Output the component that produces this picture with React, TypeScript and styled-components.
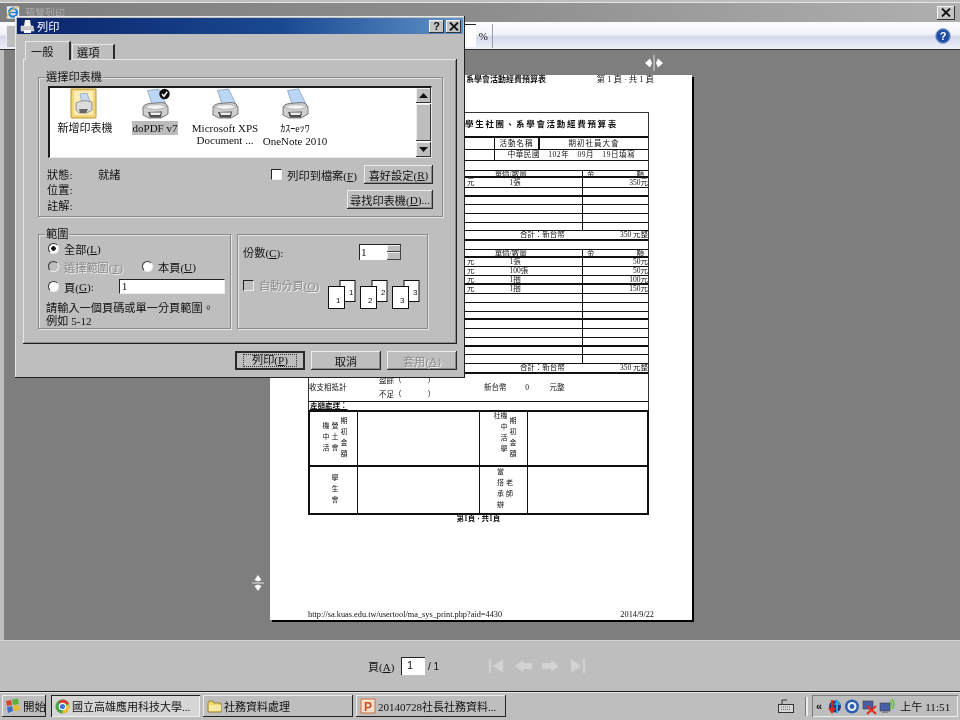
import React from 'react';
import styled, {createGlobalStyle} from 'styled-components';

const UI_FONT = `"Liberation Serif", "Noto Sans CJK TC", serif`;
const FACE = '#bebebe';

const GlobalStyle = createGlobalStyle`
  html, body {
    margin: 0;
    padding: 0;
    background: ${FACE};
  }
  #root {
    width: 960px;
    height: 720px;
    overflow: hidden;
  }
`

const Screen = styled.div`
  position: relative;
  width: 960px;
  height: 720px;
  overflow: hidden;
  display: flex;
  flex-direction: column;
  background: ${FACE};
  font-family: ${UI_FONT};
  font-size: 11px;
  color: #111;
  filter: blur(0.3px);
`

const Key = styled.u`
  text-underline-offset: 1px;
`

/* preview window */

const TitleBar = styled.div`
  height: 20px;
  margin-top: 2px;
  padding: 0 5px 0 6px;
  display: flex;
  align-items: center;
  gap: 5px;
  flex-shrink: 0;
  box-sizing: border-box;
  color: #a9a9a9;
  font-size: 10px;
  border-top: 1px solid #e4e4e4;
  background: linear-gradient(90deg, #7f7f7f 0%, #8d8d8d 50%, #b0b0b0 100%);
`

const TitleText = styled.span`
  flex: 1;
`

const CloseButton = styled.div<{$small?: boolean}>`
  width: ${p => p.$small ? 15 : 18}px;
  height: ${p => p.$small ? 13 : 14}px;
  display: flex;
  align-items: center;
  justify-content: center;
  background: #c4c4c4;
  color: #111;
  font-family: "Liberation Sans", sans-serif;
  font-weight: 700;
  font-size: 11px;
  box-shadow: inset -1px -1px #333, inset 1px 1px #f4f4f4;
`

const Toolbar = styled.div`
  height: 28px;
  flex-shrink: 0;
  display: flex;
  align-items: center;
  padding: 0 9px 0 6px;
  border-bottom: 1px solid #2e2e2e;
  box-sizing: border-box;
  background: linear-gradient(180deg, #fbfbff 0%, #f2f3fb 45%, #d4d8e9 55%, #e6e8f4 85%, #eeeff8 100%);
`

const ToolButton = styled.div`
  width: 9px;
  height: 22px;
  background: #bdbdbd;
  box-shadow: inset 1px 1px #eee;
`

const ZoomField = styled.div`
  margin-left: auto;
  width: 20px;
  height: 22px;
  background: #fff;
  border-top: 1px solid #222;
`

const ZoomUnit = styled.span`
  margin: 0 4px 0 3px;
  font-size: 11px;
`

const ToolDivider = styled.div`
  width: 1px;
  height: 24px;
  background: #9a9cab;
  margin-right: 442px;
`

const Preview = styled.div`
  position: relative;
  flex: 1;
  margin-left: 4px;
  padding: 25px 2px 0 0;
  display: flex;
  justify-content: center;
  background: #7e7e7e;
`

const ColumnHandle = styled.div`
  position: absolute;
  left: 640px;
  top: 5px;
  line-height: 0;
`

const RowHandle = styled.div`
  position: absolute;
  left: 244px;
  top: 523px;
  line-height: 0;
`

const Pager = styled.div`
  height: 51px;
  flex-shrink: 0;
  box-sizing: border-box;
  padding: 0 0 0 368px;
  display: flex;
  align-items: center;
  border-top: 1px solid #d2d2d2;
  font-size: 11px;
`

const PageLabel = styled.span`
  width: 33px;
`

const PageInput = styled.div`
  width: 24px;
  height: 18px;
  box-sizing: border-box;
  padding: 1px 0 0 5px;
  background: #fff;
  border-top: 1px solid #222;
  border-left: 1px solid #222;
  font-family: "Liberation Sans", sans-serif;
  font-size: 11px;
`

const PageTotal = styled.span`
  width: 62px;
  padding-left: 3px;
  box-sizing: border-box;
  font-family: "Liberation Sans", sans-serif;
  font-size: 10px;
`

const NavIcons = styled.div`
  display: flex;
  align-items: center;
  gap: 8px;
`

/* printed page */

const Paper = styled.div`
  width: 422px;
  height: 545px;
  box-sizing: border-box;
  padding: 0 38px;
  display: flex;
  flex-direction: column;
  background: #fff;
  box-shadow: 2px 2px 0 #000;
  font-size: 7.5px;
  line-height: 1;
  color: #111;
`

const PageHead = styled.div`
  height: 37px;
  box-sizing: border-box;
  padding: 0 0 0 38px;
  display: flex;
  justify-content: space-between;
  font-size: 8px;
  line-height: 9px;
`

const HeadBold = styled.span`
  font-weight: 700;
`

const HeadCount = styled.span`
  font-size: 8.4px;
  white-space: pre;
`

const DocTable = styled.div`
  border-top: 1px solid #333;
  border-left: 1px solid #333;
  border-right: 1px solid #333;
  width: 341px;
  box-sizing: border-box;
`

const DocRow = styled.div<{$h: number; $thick?: boolean; $cols?: string}>`
  height: ${p => p.$h}px;
  box-sizing: border-box;
  display: grid;
  grid-template-columns: ${p => p.$cols || '1fr'};
  align-items: stretch;
  border-bottom: ${p => p.$thick ? 2 : 1}px solid #111;
`

const DocCell = styled.div<{$line?: boolean; $align?: string; $thickLine?: boolean}>`
  display: flex;
  align-items: center;
  justify-content: ${p => p.$align || 'flex-start'};
  white-space: nowrap;
  border-right: ${p => p.$thickLine ? '2px solid #111' : p.$line ? '1px solid #111' : 'none'};
`

const DocHeading = styled(DocCell)`
  font-size: 8.5px;
  letter-spacing: 1.7px;
  padding-left: 156px;
  font-weight: 700;
`

const SpacedCell = styled(DocCell)`
  letter-spacing: 1px;
`

const DateCell = styled(DocCell)`
  letter-spacing: 0.6px;
`

const QtyCell = styled(DocCell)`
  padding-left: 2px;
`

const QtyText = styled.span`
  margin-left: 35px;
`

const WideGapCell = styled(DocCell)`
  justify-content: space-between;
  padding: 0 4px;
`

const AmountCell = styled(DocCell)`
  justify-content: flex-end;
`

const TotalRow = styled(DocRow)`
  display: flex;
  justify-content: flex-end;
  align-items: center;
  gap: 55px;
`

const BalanceRow = styled(DocRow)`
  display: flex;
  align-items: center;
`

const BalanceLabel = styled.span`
  width: 70px;
`

const BalanceParts = styled.div`
  width: 105px;
  display: flex;
  flex-direction: column;
  gap: 6px;
`

const BalanceAmount = styled.span`
  white-space: pre;
`

const NoteRow = styled(DocRow)`
  display: flex;
  align-items: center;
  font-weight: 700;
  padding-left: 1px;
  text-decoration: underline;
  border-color: #111;
`

const SignTable = styled.div`
  width: 341px;
  height: 105px;
  box-sizing: border-box;
  display: grid;
  grid-template-columns: 48px 122px 48px 1fr;
  grid-template-rows: 55px 1fr;
  border: 2px solid #111;
  margin-top: -1px;
`

const SignCell = styled.div<{$top?: boolean; $last?: boolean}>`
  display: flex;
  justify-content: center;
  align-items: center;
  gap: 2px;
  border-right: ${p => p.$last ? 'none' : '1px solid #111'};
  border-bottom: ${p => p.$top ? '2px solid #111' : 'none'};
`

const SignText = styled.span`
  writing-mode: vertical-rl;
  letter-spacing: 4px;
  font-size: 7px;
`

const PageNumber = styled.div`
  width: 341px;
  text-align: center;
  font-size: 7.5px;
  font-weight: 700;
`

const PageFoot = styled.div`
  margin-top: auto;
  padding-bottom: 1px;
  display: flex;
  justify-content: space-between;
  font-size: 8.3px;
`

/* print dialog */

const Dialog = styled.div`
  position: absolute;
  left: 15px;
  top: 16px;
  width: 450px;
  height: 362px;
  box-sizing: border-box;
  padding: 2px;
  background: ${FACE};
  box-shadow: inset -1px -1px #202020, inset 1px 1px #e8e8e8;
  font-size: 11.2px;
`

const DialogTitle = styled.div`
  height: 16px;
  display: flex;
  align-items: center;
  gap: 2px;
  padding: 0 2px 0 3px;
  color: #fff;
  background: linear-gradient(90deg, #0a246a 0%, #1a4a92 60%, #5f93c8 100%);
`

const DialogName = styled.span`
  flex: 1;
  font-size: 11.2px;
`

const DialogButtons = styled.div`
  display: flex;
  gap: 2px;
`

const DialogBody = styled.div`
  padding: 7px 6px 0 6px;
`

const TabStrip = styled.div`
  display: flex;
  align-items: flex-end;
  height: 18px;
  padding-left: 2px;
`

const Tab = styled.div<{$active?: boolean}>`
  width: ${p => p.$active ? 46 : 43}px;
  height: ${p => p.$active ? 19 : 15}px;
  box-sizing: border-box;
  padding-left: ${p => p.$active ? 5 : 4}px;
  margin-bottom: ${p => p.$active ? -1 : 0}px;
  position: relative;
  display: flex;
  align-items: center;
  background: ${FACE};
  border-top: 1px solid #e6e6e6;
  border-left: 1px solid #e6e6e6;
  border-right: 2px solid #2a2a2a;
  margin-right: 1px;
`

const TabPanel = styled.div`
  width: 434px;
  height: 285px;
  box-sizing: border-box;
  padding: 18px 14px 0 15px;
  box-shadow: inset -1px -1px #202020, inset 1px 1px #e6e6e6, inset -2px -2px #8a8a8a;
`

const Group = styled.div<{$w?: number; $h: number}>`
  position: relative;
  width: ${p => p.$w ? `${p.$w}px` : 'auto'};
  height: ${p => p.$h}px;
  box-sizing: border-box;
  border: 1px solid #8a8a8a;
  box-shadow: 1px 1px 0 #e4e4e4, inset 1px 1px 0 #e4e4e4;
`

const Legend = styled.span`
  position: absolute;
  left: 6px;
  top: -8px;
  padding: 0 1px;
  line-height: 14px;
  background: ${FACE};
`

const PrinterGroup = styled(Group)`
  padding: 8px 10px 0 9px;
`

const ListBox = styled.div`
  width: 384px;
  height: 72px;
  box-sizing: border-box;
  display: flex;
  background: #fff;
  border-top: 2px solid #1c1c1c;
  border-left: 2px solid #1c1c1c;
  border-bottom: 1px solid #e8e8e8;
  border-right: 1px solid #e8e8e8;
`

const PrinterItem = styled.div`
  width: 70px;
  display: flex;
  flex-direction: column;
  align-items: center;
  text-align: center;
  line-height: 12px;
  flex-shrink: 0;
  white-space: nowrap;
`

const PrinterIconBox = styled.div`
  height: 33px;
  line-height: 0;
`

const PrinterLabel = styled.span<{$selected?: boolean}>`
  padding: 1px 1px;
  background: ${p => p.$selected ? '#bcbcbc' : 'transparent'};
  font-size: 11px;
`

const SmallKana = styled.span`
  font-size: 10px;
`

const ScrollBar = styled.div`
  margin: 0 0 0 auto;
  width: 15px;
  display: flex;
  flex-direction: column;
  gap: 1px;
  background: #fff;
`

const ScrollArrow = styled.div`
  height: 15px;
  display: flex;
  align-items: center;
  justify-content: center;
  background: ${FACE};
  box-shadow: inset -1px -1px #333, inset 1px 1px #eee;
`

const ScrollThumb = styled.div`
  flex: 1;
  background: ${FACE};
  box-shadow: inset -1px -1px #333, inset 1px 1px #eee;
`

const StatusArea = styled.div`
  display: flex;
  justify-content: space-between;
  margin: 7px 0 0 -1px;
  width: 386px;
`

const StatusGrid = styled.div`
  display: grid;
  grid-template-columns: 51px auto;
  grid-auto-rows: 15.5px;
  align-items: center;
  padding-top: 1px;
`

const StatusActions = styled.div`
  display: flex;
  flex-direction: column;
  align-items: flex-end;
  gap: 6px;
`

const StatusLine = styled.div`
  display: flex;
  align-items: center;
`

const Check = styled.span<{$disabled?: boolean}>`
  width: 11px;
  height: 11px;
  box-sizing: border-box;
  margin-right: 5px;
  flex-shrink: 0;
  background: ${p => p.$disabled ? FACE : '#fff'};
  border-top: 1px solid #222;
  border-left: 1px solid #222;
  border-right: 1px solid #eee;
  border-bottom: 1px solid #eee;
`

const Button = styled.div<{$w: number; $h?: number; $default?: boolean; $disabled?: boolean}>`
  width: ${p => p.$w}px;
  height: ${p => p.$h || 19}px;
  box-sizing: border-box;
  display: flex;
  align-items: center;
  justify-content: center;
  white-space: nowrap;
  color: ${p => p.$disabled ? '#8b8b8b' : '#111'};
  text-shadow: ${p => p.$disabled ? '1px 1px 0 #f0f0f0' : 'none'};
  box-shadow: inset -1px -1px #2a2a2a, inset 1px 1px #ececec, inset -2px -2px #8a8a8a;
  background: ${FACE};
  ${p => p.$default && `
    box-shadow: inset 0 0 0 2px #2a2a2a;
  `}
`

const PreferencesButton = styled(Button)`
  margin-left: 7px;
`

const FocusBox = styled.span`
  padding: 0 8px;
  border: 1px dotted #333;
  line-height: 11px;
`

const GroupRow = styled.div`
  display: flex;
  gap: 6px;
  margin-top: 17px;
`

const RangeGroup = styled(Group)`
  padding: 5px 0 0 9px;
`

const OptionRow = styled.div<{$h: number}>`
  height: ${p => p.$h}px;
  display: flex;
  align-items: center;
`

const Radio = styled.span<{$w?: number}>`
  display: inline-flex;
  align-items: center;
  width: ${p => p.$w ? `${p.$w}px` : 'auto'};
`

const RadioDot = styled.span<{$checked?: boolean; $disabled?: boolean}>`
  width: 11px;
  height: 11px;
  box-sizing: border-box;
  margin-right: 5px;
  border-radius: 50%;
  background: ${p => p.$checked ? 'radial-gradient(circle, #111 0 2px, #fff 2.5px)' : p.$disabled ? FACE : '#fff'};
  border: 1px solid;
  border-color: #333 #eee #eee #333;
`

const DisabledText = styled.span`
  color: #8b8b8b;
  text-shadow: 1px 1px 0 #f0f0f0;
`

const TextInput = styled.div`
  width: 106px;
  height: 15px;
  margin-left: 25px;
  box-sizing: border-box;
  padding-left: 2px;
  line-height: 13px;
  background: #fff;
  border-top: 1px solid #222;
  border-left: 1px solid #222;
  border-bottom: 1px solid #eee;
  border-right: 1px solid #eee;
`

const HelpText = styled.div`
  margin: 5px 0 0 -2px;
  line-height: 12.5px;
`

const CopiesGroup = styled(Group)`
  padding: 8px 26px 0 5px;
`

const CopiesRow = styled.div`
  display: flex;
  align-items: center;
  justify-content: space-between;
  height: 17px;
`

const Spinner = styled.div`
  width: 42px;
  height: 16px;
  box-sizing: border-box;
  display: flex;
  background: #fff;
  border-top: 1px solid #222;
  border-left: 1px solid #222;
  padding-left: 1px;
  line-height: 14px;
`

const SpinValue = styled.span`
  flex: 1;
`

const SpinArrows = styled.div`
  width: 14px;
  display: flex;
  flex-direction: column;
`

const SpinArrow = styled.div`
  flex: 1;
  background: ${FACE};
  box-shadow: inset -1px -1px #444, inset 1px 1px #eee;
`

const CollateRow = styled.div`
  margin-top: 20px;
  margin-right: -19px;
  display: flex;
  justify-content: space-between;
`

const CollateLabel = styled.div`
  display: flex;
  align-items: center;
  height: 10px;
`

const DialogActions = styled.div`
  display: flex;
  justify-content: flex-end;
  gap: 6px;
  margin-top: 7px;
  width: 434px;
`

/* taskbar */

const Taskbar = styled.div`
  height: 29px;
  flex-shrink: 0;
  box-sizing: border-box;
  padding: 3px 2px 3px 2px;
  display: flex;
  align-items: stretch;
  border-top: 1px solid #1e1e1e;
  box-shadow: inset 0 1px #e8e8e8;
  background: ${FACE};
  font-size: 11px;
`

const StartButton = styled.div`
  width: 44px;
  margin-right: 5px;
  display: flex;
  align-items: center;
  gap: 2px;
  padding-left: 3px;
  box-sizing: border-box;
  font-size: 11.5px;
  box-shadow: inset -1px -1px #222, inset 1px 1px #eee;
`

const TaskButton = styled.div<{$active?: boolean; $w: number}>`
  width: ${p => p.$w}px;
  margin-right: 3px;
  box-sizing: border-box;
  display: flex;
  align-items: center;
  gap: 2px;
  padding-left: 4px;
  white-space: nowrap;
  overflow: hidden;
  background: ${p => p.$active ? '#d6d6d6' : FACE};
  box-shadow: ${p => p.$active
    ? 'inset 1px 1px #222, inset -1px -1px #f0f0f0'
    : 'inset -1px -1px #222, inset 1px 1px #eee'};
`

const TrayStart = styled.div`
  margin-left: auto;
  display: flex;
  align-items: center;
  gap: 11px;
`

const TrayGrip = styled.div`
  width: 2px;
  height: 19px;
  margin-right: 4px;
  background: #eee;
  border-left: 1px solid #777;
`

const Tray = styled.div`
  width: 146px;
  box-sizing: border-box;
  display: flex;
  align-items: center;
  padding-left: 4px;
  gap: 3px;
  box-shadow: inset 1px 1px #7d7d7d, inset -1px -1px #eee;
`

const TrayChevron = styled.span`
  font-family: "Liberation Sans", sans-serif;
  font-weight: 700;
  font-size: 11px;
  width: 8px;
`

const Clock = styled.span`
  font-size: 11.2px;
  white-space: nowrap;
`

/* drawings */

const XMark = () => (
  <svg width="10" height="9" viewBox="0 0 10 9">
    <path d="M1 0.5 L9 8.5 M9 0.5 L1 8.5" stroke="#111" strokeWidth="1.8" />
  </svg>
)

const Arrow: React.FC<{down?: boolean}> = ({down}) => (
  <svg width="9" height="5" viewBox="0 0 9 5">
    <path d={down ? 'M0 0 H9 L4.5 5 Z' : 'M0 5 H9 L4.5 0 Z'} fill="#111" />
  </svg>
)

const PrinterIcon: React.FC<{ready?: boolean}> = ({ready}) => (
  <svg width="36" height="33" viewBox="0 0 36 33">
    <path d="M10.5 2.5 L21.5 1 L28.5 15 L15.5 17.5 Z" fill="#bcd6f6" stroke="#7d93ad" strokeWidth="0.7" />
    <path d="M6 19 Q7 16 12 15.5 L25 14.5 Q30 15 31 19 V26 L24 30 H12 L6 27 Z" fill="#cfcfcf" stroke="#5e5e5e" strokeWidth="0.8" />
    <path d="M7 19 Q18 14.5 30 18.5 Q20 24 7 19 Z" fill="#f4f4f4" stroke="#8c8c8c" strokeWidth="0.5" />
    <path d="M11 24 L25 23.5 L24 29.5 H13 Z" fill="#4d4d4d" />
    <path d="M13 24.5 H24 L23 27 H14 Z" fill="#ededed" />
    {ready && (
      <g>
        <circle cx="27.5" cy="6" r="5.2" fill="#0b0b0b" />
        <path d="M25 6 L27 8.2 L30.2 3.8" stroke="#fff" strokeWidth="1.5" fill="none" />
      </g>
    )}
  </svg>
)

const AddPrinterIcon = () => (
  <svg width="36" height="33" viewBox="0 0 36 33">
    <path d="M4 1 H29 V29 Q29 30 28 30 H5 Q4 30 4 29 Z" fill="#f4d77a" stroke="#b8962f" />
    <path d="M7 3 H26 V27 H7 Z" fill="#fbeeb9" />
    <path d="M13 6 L20 5 L23 14 L15 15 Z" fill="#c5daf3" stroke="#8094ad" strokeWidth="0.6" />
    <path d="M9 15 Q16 11 25 14 V22 L20 25 H12 L9 22 Z" fill="#dcdcdc" stroke="#6f6f6f" strokeWidth="0.7" />
    <path d="M12 21 H21 L19 25 H13 Z" fill="#666" />
  </svg>
)

const DialogPrinter = () => (
  <svg width="15" height="15" viewBox="0 0 15 15">
    <path d="M5 1 L10 1 L11 7 H4 Z" fill="#f4f4f4" />
    <path d="M1 7 H13 L14 12 H1 Z" fill="#c8c8c8" stroke="#eee" strokeWidth="0.6" />
    <path d="M4 11 H11 V14 H4 Z" fill="#fff" />
  </svg>
)

const IeIcon = () => (
  <svg width="14" height="15" viewBox="0 0 16 16">
    <rect x="1" y="1" width="14" height="14" fill="#e9eef6" />
    <circle cx="8" cy="8" r="4.6" fill="none" stroke="#2a7fd4" strokeWidth="2.6" />
    <path d="M4 8 H13" stroke="#2a7fd4" strokeWidth="1.6" />
    <path d="M1 14 Q2 5 14 2" stroke="#e5c33a" strokeWidth="1.4" fill="none" />
  </svg>
)

const SplitH = () => (
  <svg width="20" height="16" viewBox="0 0 20 16">
    <path d="M1 8 L6 3.5 L8 8 L6 12.5 Z M19 8 L14 3.5 L12 8 L14 12.5 Z" fill="#fff" />
    <path d="M10 0 V16" stroke="#e0e0e0" strokeWidth="1" />
  </svg>
)

const SplitV = () => (
  <svg width="20" height="20" viewBox="0 0 20 20">
    <path d="M10 2 L6.5 7 L10 8.5 L13.5 7 Z M10 18 L6.5 13 L10 11.5 L13.5 13 Z" fill="#fff" />
    <path d="M4 10 H16" stroke="#e0e0e0" strokeWidth="1" />
  </svg>
)

const HelpIcon = () => (
  <svg width="16" height="16" viewBox="0 0 16 16">
    <circle cx="8" cy="8" r="7.4" fill="#2d5fb3" stroke="#9aa8c8" strokeWidth="1" />
    <circle cx="8" cy="8" r="5.6" fill="#1f4aa0" />
    <text x="8" y="12" textAnchor="middle" fontSize="11" fontWeight="700" fill="#fff" fontFamily="Liberation Sans">?</text>
  </svg>
)

const NavIcon: React.FC<{d: string}> = ({d}) => (
  <svg width="19" height="18" viewBox="0 0 19 18">
    <path d={d} fill="#d3d3d3" stroke="#c9c9c9" strokeWidth="0.6" />
  </svg>
)

const CollateIcon = () => {
  const pages = [1, 2, 3]
  return (
    <svg width="92" height="30" viewBox="0 0 92 30">
      {pages.map((n, i) => (
        <g key={n} fontFamily="Liberation Sans" fontSize="8" fill="#111">
          <rect x={12 + i * 32} y="0.5" width="15" height="21" fill="#fff" stroke="#111" />
          <text x={21 + i * 32} y="15">{n}</text>
          <rect x={0.5 + i * 32} y="6.5" width="16" height="22" fill="#fff" stroke="#111" />
          <text x={8 + i * 32} y="23">{n}</text>
        </g>
      ))}
    </svg>
  )
}

const WindowsFlag = () => (
  <svg width="16" height="16" viewBox="0 0 16 16">
    <path d="M1 3 L6 2 L7 7 L2 8 Z" fill="#d8452c" />
    <path d="M7 1.5 L13 0.5 L14 6 L8 7 Z" fill="#5fae3b" />
    <path d="M2 9 L7 8 L8 13 L3 15 Z" fill="#3f6fc4" />
    <path d="M8 8 L14 7 L15 12 L9 13 Z" fill="#e9b92f" />
  </svg>
)

const ChromeIcon = () => (
  <svg width="15" height="15" viewBox="0 0 15 15">
    <circle cx="7.5" cy="7.5" r="7" fill="#4aa54a" />
    <path d="M7.5 .5 A7 7 0 0 1 14 5 H7.5 L3 4 A7 7 0 0 1 7.5 .5 Z" fill="#d8402f" />
    <path d="M14 5 A7 7 0 0 1 7 14.5 L10 8 Z" fill="#f0c330" />
    <circle cx="7.5" cy="7.5" r="3.2" fill="#3f79d8" stroke="#fff" strokeWidth="1.2" />
  </svg>
)

const FolderIcon = () => (
  <svg width="15" height="13" viewBox="0 0 15 13">
    <path d="M1 3 L2 1 H6 L7 3 H14 V12 H1 Z" fill="#f2d76e" stroke="#8a7426" strokeWidth="0.8" />
    <path d="M2 5 H14 V11 H2 Z" fill="#f8e9a4" />
  </svg>
)

const PptIcon = () => (
  <svg width="16" height="16" viewBox="0 0 16 16">
    <rect x="1" y="1" width="14" height="14" fill="#f6e1d0" stroke="#d0703c" />
    <text x="8" y="12.5" textAnchor="middle" fontSize="12" fontWeight="700" fill="#c8501e" fontFamily="Liberation Sans">P</text>
  </svg>
)

const KeyboardIcon = () => (
  <svg width="16" height="15" viewBox="0 0 16 15">
    <path d="M4 5 V1 H9" stroke="#333" fill="none" />
    <rect x="0.5" y="5.5" width="15" height="8" fill="#d8d8d8" stroke="#333" />
    <path d="M3 8 H13 M3 10.5 H13" stroke="#666" strokeDasharray="1 1" />
  </svg>
)

const TrayIcons = () => (
  <svg width="70" height="17" viewBox="0 0 70 17">
    <circle cx="8" cy="8.5" r="6" fill="#1c3a8c" />
    <path d="M4 2 V10 H1 L5 16 L9 10 H6.5 V2 Z" fill="#d42a1e" />
    <path d="M11 15 V7 H14 L10 1 L7 7 H9 V15 Z" fill="#2aa8d8" />
    <circle cx="25" cy="8.5" r="7" fill="#2a5fae" />
    <circle cx="25" cy="8.5" r="4.5" fill="#e8eef8" />
    <circle cx="25" cy="8.5" r="2.4" fill="#2a5fae" />
    <rect x="36" y="3" width="10" height="8" fill="#4a5ea8" stroke="#333" strokeWidth="0.5" />
    <path d="M40 8 L49 16 M49 8 L40 16" stroke="#e02a20" strokeWidth="2" />
    <rect x="53" y="5" width="10" height="8" fill="#4a5ea8" stroke="#333" strokeWidth="0.5" />
    <path d="M55 14 H61" stroke="#888" strokeWidth="2" />
    <path d="M63 3 Q66 6 63 9 M65 1 Q69 6 65 11" stroke="#5bc22f" strokeWidth="1.3" fill="none" />
  </svg>
)

/* page data */

const COLS_ITEM = '156px 118px 1fr'
const COLS_META = '186px 45px 1fr'

const firstBudget = [
  {h: 10, price: '元', qty: '1張', amount: '350元'},
  {h: 9, thick: true},
  {h: 8},
  {h: 9},
  {h: 9},
  {h: 8},
]

const secondBudget = [
  {h: 9, price: '元', qty: '1張', amount: '50元'},
  {h: 9, price: '元', qty: '100張', amount: '50元'},
  {h: 9, thick: true, price: '元', qty: '1捆', amount: '100元'},
  {h: 9, price: '元', qty: '1捆', amount: '150元'},
  {h: 9},
  {h: 9},
  {h: 8, thick: true},
  {h: 9},
  {h: 9},
  {h: 9, thick: true},
  {h: 8},
  {h: 9},
]

type BudgetLine = {h: number; thick?: boolean; price?: string; qty?: string; amount?: string}

const BudgetRows: React.FC<{head: number; lines: BudgetLine[]; total: string}> = ({head, lines, total}) => (
  <>
    <DocRow $h={head} $thick $cols={COLS_ITEM}>
      <DocCell />
      <WideGapCell $line><span /><span>單價/數量</span><span /><span /></WideGapCell>
      <WideGapCell><span>金</span><span>額</span></WideGapCell>
    </DocRow>
    {lines.map((line, i) => (
      <DocRow key={i} $h={line.h} $thick={line.thick} $cols={COLS_ITEM}>
        <DocCell />
        <QtyCell $line>
          {line.price}<QtyText>{line.qty}</QtyText>
        </QtyCell>
        <AmountCell>{line.amount}</AmountCell>
      </DocRow>
    ))}
    <TotalRow $h={10} $thick>
      <span>合計：新台幣</span>
      <span>{total} 元整</span>
    </TotalRow>
  </>
)

const App: React.FC = () => {
  return (
    <Screen>
      <GlobalStyle />

      <TitleBar>
        <IeIcon />
        <TitleText>預覽列印</TitleText>
        <CloseButton><XMark /></CloseButton>
      </TitleBar>

      <Toolbar>
        <ToolButton />
        <ZoomField />
        <ZoomUnit>%</ZoomUnit>
        <ToolDivider />
        <HelpIcon />
      </Toolbar>

      <Preview>
        <Paper>
          <PageHead>
            <HeadBold>國立高雄應用科技大學學生社團、系學會活動經費預算表</HeadBold>
            <HeadCount>第 1 頁 · 共 1 頁</HeadCount>
          </PageHead>

          <DocTable>
            <DocRow $h={25} $thick><DocHeading>學生社團、系學會活動經費預算表</DocHeading></DocRow>
            <DocRow $h={12} $cols={COLS_META}>
              <DocCell $line />
              <SpacedCell $thickLine $align="center">活動名稱</SpacedCell>
              <SpacedCell $align="center">期初社員大會</SpacedCell>
            </DocRow>
            <DocRow $h={11} $cols="186px 1fr">
              <DocCell $line />
              <DateCell $align="center">中華民國　102年　09月　19日填寫</DateCell>
            </DocRow>
            <DocRow $h={10} />
            <BudgetRows head={7} lines={firstBudget} total="350" />
            <DocRow $h={9} />
            <BudgetRows head={8} lines={secondBudget} total="350" />
            <BalanceRow $h={28}>
              <BalanceLabel>收支相抵計</BalanceLabel>
              <BalanceParts>
                <BalanceAmount>盈餘（              ）</BalanceAmount>
                <BalanceAmount>不足（              ）</BalanceAmount>
              </BalanceParts>
              <BalanceAmount>新台幣          0           元整</BalanceAmount>
            </BalanceRow>
            <NoteRow $h={9}>差額處理：</NoteRow>
          </DocTable>

          <SignTable>
            <SignCell $top><SignText>機中活</SignText><SignText>營土會</SignText><SignText>期初金額</SignText></SignCell>
            <SignCell $top />
            <SignCell $top><SignText>機中活學社</SignText><SignText>期初金額</SignText></SignCell>
            <SignCell $top $last />
            <SignCell><SignText>學生會</SignText></SignCell>
            <SignCell />
            <SignCell><SignText>當搭承辦</SignText><SignText>老師</SignText></SignCell>
            <SignCell $last />
          </SignTable>
          <PageNumber>第1頁 · 共1頁</PageNumber>

          <PageFoot>
            <span>http://sa.kuas.edu.tw/usertool/ma_sys_print.php?aid=4430</span>
            <span>2014/9/22</span>
          </PageFoot>
        </Paper>

        <ColumnHandle><SplitH /></ColumnHandle>
        <RowHandle><SplitV /></RowHandle>
      </Preview>

      <Pager>
        <PageLabel>頁(<Key>A</Key>)</PageLabel>
        <PageInput>1</PageInput>
        <PageTotal>/ 1</PageTotal>
        <NavIcons>
          <NavIcon d="M2 2 H4 V16 H2 Z M16 2 V16 L6 9 Z" />
          <NavIcon d="M1 9 L9 3 V6 H18 V12 H9 V15 Z" />
          <NavIcon d="M18 9 L10 3 V6 H1 V12 H10 V15 Z" />
          <NavIcon d="M3 2 L13 9 L3 16 Z M15 2 H17 V16 H15 Z" />
        </NavIcons>
      </Pager>

      <Taskbar>
        <StartButton><WindowsFlag />開始</StartButton>
        <TaskButton $active $w={149}><ChromeIcon />國立高雄應用科技大學...</TaskButton>
        <TaskButton $w={150}><FolderIcon />社務資料處理</TaskButton>
        <TaskButton $w={150}><PptIcon />20140728社長社務資料...</TaskButton>
        <TrayStart>
          <KeyboardIcon />
          <TrayGrip />
        </TrayStart>
        <Tray>
          <TrayChevron>«</TrayChevron>
          <TrayIcons />
          <Clock>上午 11:51</Clock>
        </Tray>
      </Taskbar>

      <Dialog>
        <DialogTitle>
          <DialogPrinter />
          <DialogName>列印</DialogName>
          <DialogButtons>
            <CloseButton $small>?</CloseButton>
            <CloseButton $small><XMark /></CloseButton>
          </DialogButtons>
        </DialogTitle>

        <DialogBody>
          <TabStrip>
            <Tab $active>一般</Tab>
            <Tab>選項</Tab>
          </TabStrip>
          <TabPanel>
            <PrinterGroup $h={140}>
              <Legend>選擇印表機</Legend>
              <ListBox>
                <PrinterItem>
                  <PrinterIconBox><AddPrinterIcon /></PrinterIconBox>
                  <PrinterLabel>新增印表機</PrinterLabel>
                </PrinterItem>
                <PrinterItem>
                  <PrinterIconBox><PrinterIcon ready /></PrinterIconBox>
                  <PrinterLabel $selected>doPDF v7</PrinterLabel>
                </PrinterItem>
                <PrinterItem>
                  <PrinterIconBox><PrinterIcon /></PrinterIconBox>
                  <PrinterLabel>Microsoft XPS<br />Document ...</PrinterLabel>
                </PrinterItem>
                <PrinterItem>
                  <PrinterIconBox><PrinterIcon /></PrinterIconBox>
                  <PrinterLabel><SmallKana>ｶｽｰeｯﾜ</SmallKana><br />OneNote 2010</PrinterLabel>
                </PrinterItem>
                <ScrollBar>
                  <ScrollArrow><Arrow /></ScrollArrow>
                  <ScrollThumb />
                  <ScrollArrow><Arrow down /></ScrollArrow>
                </ScrollBar>
              </ListBox>
              <StatusArea>
                <StatusGrid>
                  <span>狀態:</span><span>就緒</span>
                  <span>位置:</span><span />
                  <span>註解:</span><span />
                </StatusGrid>
                <StatusActions>
                  <StatusLine>
                    <Check />
                    <span>列印到檔案(<Key>F</Key>)</span>
                    <PreferencesButton $w={69}>喜好設定(<Key>R</Key>)</PreferencesButton>
                  </StatusLine>
                  <Button $w={86}>尋找印表機(<Key>D</Key>)...</Button>
                </StatusActions>
              </StatusArea>
            </PrinterGroup>

            <GroupRow>
              <RangeGroup $w={193} $h={95}>
                <Legend>範圍</Legend>
                <OptionRow $h={17}>
                  <Radio><RadioDot $checked />全部(<Key>L</Key>)</Radio>
                </OptionRow>
                <OptionRow $h={19}>
                  <Radio $w={94}><RadioDot $disabled /><DisabledText>選擇範圍(<Key>T</Key>)</DisabledText></Radio>
                  <Radio><RadioDot />本頁(<Key>U</Key>)</Radio>
                </OptionRow>
                <OptionRow $h={21}>
                  <Radio><RadioDot />頁(<Key>G</Key>):</Radio>
                  <TextInput>1</TextInput>
                </OptionRow>
                <HelpText>請輸入一個頁碼或單一分頁範圍。<br />例如 5-12</HelpText>
              </RangeGroup>

              <CopiesGroup $w={191} $h={95}>
                <CopiesRow>
                  <span>份數(<Key>C</Key>):</span>
                  <Spinner>
                    <SpinValue>1</SpinValue>
                    <SpinArrows><SpinArrow /><SpinArrow /></SpinArrows>
                  </Spinner>
                </CopiesRow>
                <CollateRow>
                  <CollateLabel>
                    <Check $disabled />
                    <DisabledText>自動分頁(<Key>O</Key>)</DisabledText>
                  </CollateLabel>
                  <CollateIcon />
                </CollateRow>
              </CopiesGroup>
            </GroupRow>
          </TabPanel>

          <DialogActions>
            <Button $w={70} $default><FocusBox>列印(<Key>P</Key>)</FocusBox></Button>
            <Button $w={70}>取消</Button>
            <Button $w={70} $disabled>套用(<Key>A</Key>)</Button>
          </DialogActions>
        </DialogBody>
      </Dialog>
    </Screen>
  )
}

export default App;
